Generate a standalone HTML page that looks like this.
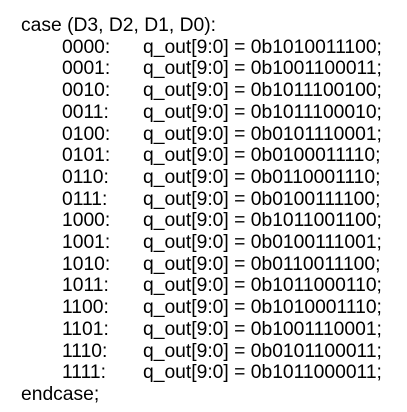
<!DOCTYPE html>
<html><head><style>
body{margin:0;width:407px;height:412px;background:#fff;overflow:hidden;font-family:"Liberation Sans",Arial,sans-serif;font-size:19.3px;color:#000}
.l{position:absolute;white-space:pre;line-height:1}
</style></head><body>
<div id="c"></div>
<script>
var rows=[["0000","1010011100"],["0001","1001100011"],["0010","1011100100"],["0011","1011100010"],["0100","0101110001"],["0101","0100011110"],["0110","0110001110"],["0111","0100111100"],["1000","1011001100"],["1001","0100111001"],["1010","0110011100"],["1011","1011000110"],["1100","1010001110"],["1101","1001110001"],["1110","0101100011"],["1111","1011000011"]];
var h='';function L(x,b,t){h+='<div class="l" style="left:'+x+'px;top:'+(b-15)+'px">'+t+'</div>';}
L(21,31,'case (D3, D2, D1, D0):');
rows.forEach(function(r,i){var b=31+(i+1)*21.7;L(62,b,r[0]+':');L(143,b,'q_out[9:0] = 0b'+r[1]+';');});
L(21,31+17*21.7,'endcase;');
document.getElementById('c').innerHTML=h;
</script>
</body></html>
